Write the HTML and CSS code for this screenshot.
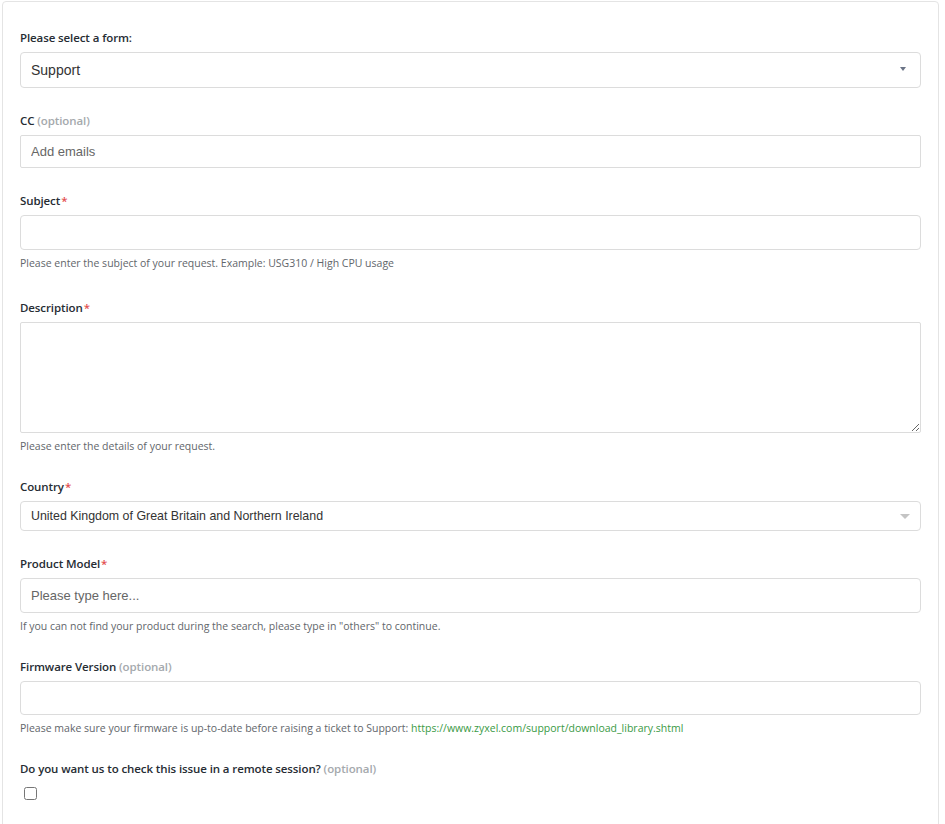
FILE: index.html
```html
<!DOCTYPE html>
<html lang="en">
<head>
<meta charset="utf-8">
<title>Support request</title>
<link rel="stylesheet" href="styles.css">
</head>
<body>
<div class="card">
  <form class="form">
    <div class="field">
      <label class="label">Please select a form:</label>
      <div class="select select-form">
        <span class="select-value">Support</span>
        <span class="arrow-small"></span>
      </div>
    </div>

    <div class="field">
      <label class="label">CC <span class="optional">(optional)</span></label>
      <input class="input input-cc" type="text" placeholder="Add emails">
    </div>

    <div class="field field-subject">
      <label class="label">Subject<span class="req">*</span></label>
      <input class="input input-subject" type="text">
      <p class="help">Please enter the subject of your request. Example: USG310 / High CPU usage</p>
    </div>

    <div class="field">
      <label class="label">Description<span class="req">*</span></label>
      <textarea class="input textarea"></textarea>
      <p class="help">Please enter the details of your request.</p>
    </div>

    <div class="field">
      <label class="label">Country<span class="req">*</span></label>
      <div class="select select-country">
        <span class="select-value country-value">United Kingdom of Great Britain and Northern Ireland</span>
        <span class="arrow-large"></span>
      </div>
    </div>

    <div class="field">
      <label class="label">Product Model<span class="req">*</span></label>
      <input class="input input-product" type="text" placeholder="Please type here...">
      <p class="help">If you can not find your product during the search, please type in "others" to continue.</p>
    </div>

    <div class="field">
      <label class="label">Firmware Version <span class="optional">(optional)</span></label>
      <input class="input input-firmware" type="text">
      <p class="help">Please make sure your firmware is up-to-date before raising a ticket to Support: <a class="link" href="#">https://www.zyxel.com/support/download_library.shtml</a></p>
    </div>

    <div class="field">
      <label class="label">Do you want us to check this issue in a remote session? <span class="optional">(optional)</span></label>
      <input class="checkbox" type="checkbox">
    </div>
  </form>
</div>
</body>
</html>
```

FILE: styles.css
```css
html, body {
  margin: 0;
  padding: 0;
  background: #ffffff;
}

body {
  font-family: "Open Sans", "Noto Sans", sans-serif;
  color: #2f3941;
}

.card {
  box-sizing: border-box;
  width: 937px;
  min-height: 840px;
  margin: 1px 0 0 2px;
  border: 1px solid #e4e4e4;
  border-radius: 4px;
  padding: 27px 17px 0 17px;
}

.form {
  display: flex;
  flex-direction: column;
}

.field {
  display: flex;
  flex-direction: column;
  margin-bottom: 24px;
}

.field-subject {
  margin-bottom: 28px;
}

.label {
  display: block;
  font-size: 11.5px;
  font-weight: 600;
  line-height: 18px;
  margin-bottom: 5px;
  color: #262c33;
  letter-spacing: -0.1px;
}

.optional {
  color: #a5a9ad;
  font-weight: 600;
}

.req {
  color: #e34f4f;
  margin-left: 1px;
}

.input,
.select {
  box-sizing: border-box;
  width: 100%;
  border: 1px solid #dcdcdc;
  border-radius: 4px;
  background: #ffffff;
  font-family: "Liberation Sans", Arial, sans-serif;
  font-size: 13px;
  color: #333333;
  padding: 0 10px;
  margin: 0;
  outline: none;
}

.input::placeholder {
  color: #666666;
  opacity: 1;
}

.select {
  display: flex;
  align-items: center;
  justify-content: space-between;
}

.select-form {
  height: 36px;
  padding-right: 14px;
  font-size: 14px;
}

.select-country {
  height: 30px;
  padding-right: 10px;
}

.country-value {
  font-size: 12.4px;
}

.arrow-small {
  width: 0;
  height: 0;
  border-left: 3px solid transparent;
  border-right: 3px solid transparent;
  border-top: 4px solid #6b7486;
  margin-top: -2px;
}

.arrow-large {
  width: 0;
  height: 0;
  border-left: 5px solid transparent;
  border-right: 5px solid transparent;
  border-top: 5px solid #c4c4c4;
}

.input-cc {
  height: 33px;
  border-radius: 2px;
}

.input-subject {
  height: 35px;
}

.textarea {
  height: 111px;
  resize: vertical;
  padding: 8px 10px;
  border-radius: 2px;
}

.input-product {
  height: 35px;
}

.input-firmware {
  height: 34px;
}

.help {
  margin: 5px 0 0 0;
  font-size: 10.5px;
  line-height: 16px;
  color: #62666b;
}

.link {
  color: #3a9a45;
  text-decoration: none;
}

.checkbox {
  width: 13px;
  height: 13px;
  margin: 4px 0 0 4px;
}
```
